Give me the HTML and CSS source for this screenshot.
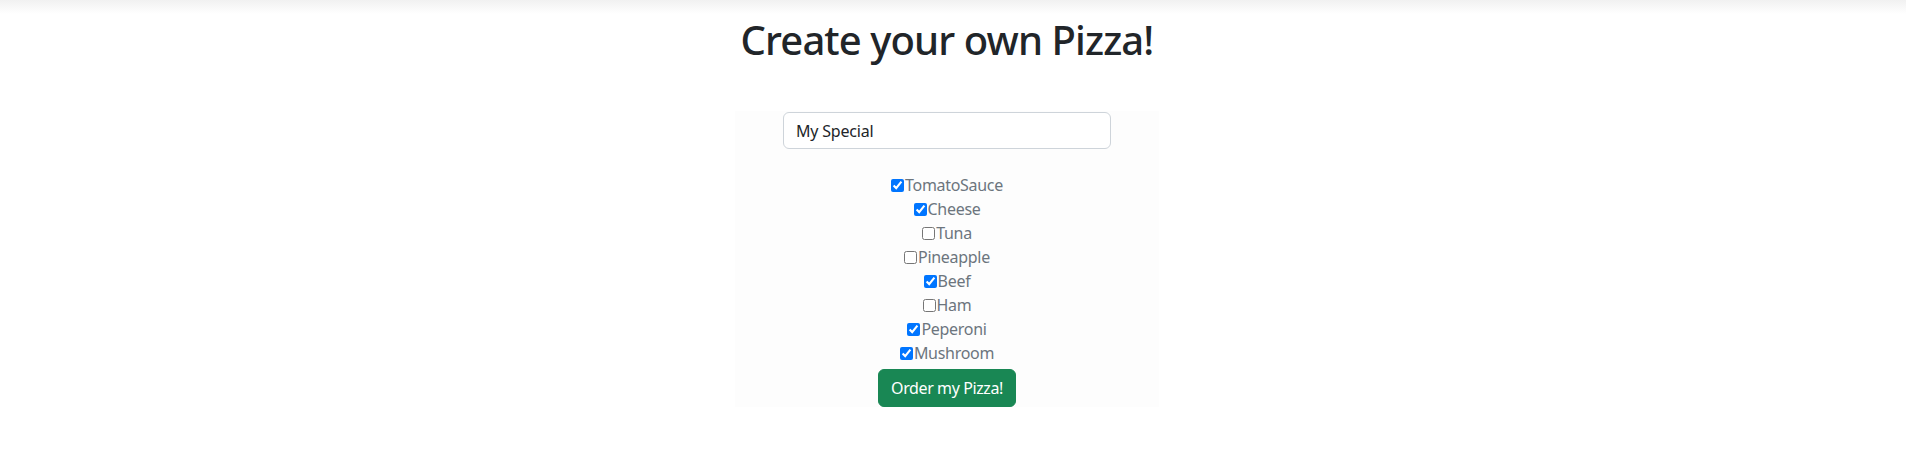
FILE: index.html
```html
<!DOCTYPE html>
<html lang="en">
<head>
<meta charset="utf-8">
<title>Create your own Pizza!</title>
<link rel="stylesheet" href="styles.css">
</head>
<body>
<div class="topbar"></div>
<main class="page">
  <h1 class="title">Create your own Pizza!</h1>
  <form class="panel">
    <input class="name-input" type="text" value="My Special">
    <ul class="toppings">
      <li><label><input type="checkbox" checked>TomatoSauce</label></li>
      <li><label><input type="checkbox" checked>Cheese</label></li>
      <li><label><input type="checkbox">Tuna</label></li>
      <li><label><input type="checkbox">Pineapple</label></li>
      <li><label><input type="checkbox" checked>Beef</label></li>
      <li><label><input type="checkbox">Ham</label></li>
      <li><label><input type="checkbox" checked>Peperoni</label></li>
      <li><label><input type="checkbox" checked>Mushroom</label></li>
    </ul>
    <button class="order-btn" type="button">Order my Pizza!</button>
  </form>
</main>
</body>
</html>
```
FILE: styles.css
```css
html, body {
  margin: 0;
  padding: 0;
  background: #fff;
}
body {
  font-family: "Noto Sans", "Open Sans", sans-serif;
  font-size: 16px;
  line-height: 1.5;
  color: #212529;
}
.topbar {
  height: 14px;
  background: linear-gradient(#f1f1f1, #ffffff);
  margin-bottom: -14px;
}
.page {
  display: flex;
  flex-direction: column;
  align-items: center;
  padding-right: 12px;
}
.title {
  margin: 16px 0 0;
  font-size: 40px;
  font-weight: 500;
  line-height: 1.2;
  color: #212529;
  letter-spacing: -0.9px;
}
.panel {
  margin-top: 47px;
  width: 424px;
  height: 296px;
  background: #fdfdfd;
  display: flex;
  flex-direction: column;
  align-items: center;
}
.name-input {
  box-sizing: border-box;
  width: 328px;
  height: 38px;
  margin-top: 1px;
  padding: 6px 12px;
  border: 1px solid #ced4da;
  border-radius: 6px;
  font-family: inherit;
  font-size: 16px;
  letter-spacing: -0.2px;
  color: #212529;
  background: #fff;
  outline: none;
}
.toppings {
  list-style: none;
  margin: 24px 0 0;
  padding: 0;
  display: flex;
  flex-direction: column;
  align-items: center;
}
.toppings li {
  height: 24px;
  line-height: 24px;
  color: #6c757d;
  letter-spacing: -0.3px;
}
.toppings label {
  display: flex;
  align-items: center;
}
.toppings input {
  width: 13px;
  height: 13px;
  margin: 0 1px 0 0;
}
.order-btn {
  margin-top: 4px;
  height: 38px;
  padding: 6px 12px;
  border: 1px solid #198754;
  border-radius: 6px;
  background: #198754;
  color: #fff;
  font-family: inherit;
  font-size: 16px;
  line-height: 1.5;
  letter-spacing: -0.4px;
}
```
